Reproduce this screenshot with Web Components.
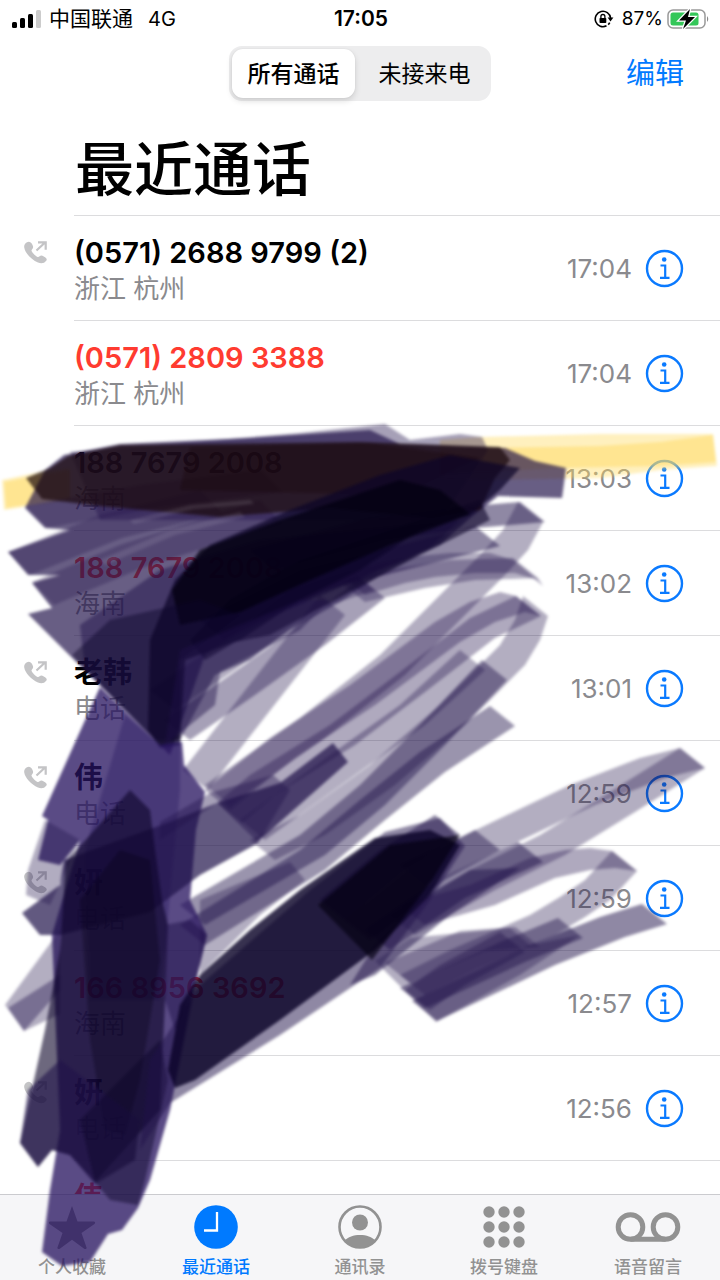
<!DOCTYPE html>
<html lang="zh-CN">
<head>
<meta charset="utf-8">
<meta name="viewport" content="width=device-width, initial-scale=1">
<title>最近通话</title>
<style>
  html, body { margin: 0; height: 100%; background: #fff; }
  body { font-family: Inter, "Noto Sans CJK SC", sans-serif; color: #000; }
</style>
</head>
<body>
<phone-screen>
  <status-bar slot="status" carrier="中国联通" network="4G" time="17:05" battery="87%"></status-bar>
  <recents-header slot="header"></recents-header>
  <call-row outgoing time="17:04">(0571) 2688 9799 (2)<span slot="place">浙江 杭州</span></call-row>
  <call-row missed time="17:04">(0571) 2809 3388<span slot="place">浙江 杭州</span></call-row>
  <call-row time="13:03">188 7679 2008<span slot="place">海南</span></call-row>
  <call-row missed time="13:02">188 7679 2008<span slot="place">海南</span></call-row>
  <call-row outgoing time="13:01">老韩<span slot="place">电话</span></call-row>
  <call-row outgoing time="12:59">伟<span slot="place">电话</span></call-row>
  <call-row outgoing time="12:59">妍<span slot="place">电话</span></call-row>
  <call-row missed time="12:57">166 8956 3692<span slot="place">海南</span></call-row>
  <call-row outgoing time="12:56">妍<span slot="place">电话</span></call-row>
  <call-row missed>伟</call-row>
  <tab-bar slot="tabs"></tab-bar>
  <marker-overlay slot="overlay"></marker-overlay>
</phone-screen>

<script>
function define(name, render) {
  customElements.define(name, class extends HTMLElement {
    constructor() {
      super();
      this.attachShadow({ mode: 'open' });
    }
    connectedCallback() {
      const t = document.createElement('template');
      t.innerHTML = render(this);
      this.shadowRoot.replaceChildren(t.content.cloneNode(true));
    }
  });
}

define('phone-screen', () => `
  <style>
    :host { display: flex; flex-direction: column; position: relative; height: 100vh; overflow: hidden; background: #fff; }
    main { flex: 1; min-height: 0; overflow: hidden; }
    .list { border-top: 1px solid #dcdcde; margin-left: 74px; }
  </style>
  <slot name="status"></slot>
  <slot name="header"></slot>
  <main><div class="list"></div><slot></slot></main>
  <slot name="tabs"></slot>
  <slot name="overlay"></slot>`);

define('status-bar', el => `
  <style>
    :host { display: grid; grid-template-columns: 1fr auto 1fr; align-items: center; height: 37px; padding: 0 10px 0 12px; font-size: 19px; line-height: 24px; }
    .left, .right { display: flex; align-items: center; }
    .left { gap: 8px; }
    .net { margin-left: 7px; font-size: 20px; }
    .right { justify-content: flex-end; gap: 4px; }
    .lock { margin-right: 4px; }
    .carrier { font-size: 21px; }
    b { font-weight: 600; font-size: 21px; }
    svg { display: block; }
  </style>
  <div class="left">
    <svg width="29" height="20" viewBox="0 0 29 20"><rect x="0" y="13" width="5" height="6" rx="1.5"/><rect x="8" y="9" width="5" height="10" rx="1.5"/><rect x="16" y="5" width="5" height="14" rx="1.5"/><rect x="24" y="1" width="5" height="18" rx="1.5" fill="#ccc"/></svg>
    <span class="carrier">${el.getAttribute('carrier')}</span><span class="net">${el.getAttribute('network')}</span>
  </div>
  <b>${el.getAttribute('time')}</b>
  <div class="right">
    <svg class="lock" width="20" height="18" viewBox="0 0 20 18"><path d="M12.5 15.8A7.7 7.7 0 1 1 16.6 8" fill="none" stroke="#000" stroke-width="1.6"/><path d="M13.6 7.6h5.8L16.5 11.400z"/><path d="M14.200 14.600a7.700 7.700 0 0 0 1.500-2" fill="none" stroke="#000" stroke-width="1.600"/><rect x="5.500" y="8" width="6.800" height="5" rx=".8"/><path d="M6.900 8V6.500a2 2 0 0 1 4 0V8" fill="none" stroke="#000" stroke-width="1.300"/></svg>
    <span>${el.getAttribute('battery')}</span>
    <svg width="43" height="22" viewBox="0 0 43 22"><rect x="1" y="2" width="37" height="18" rx="5" fill="none" stroke="#999" stroke-width="1.500"/><rect x="3.500" y="4.500" width="28" height="13" rx="2.500" fill="#34c759"/><path d="M40 8q2.500 3 0 6z" fill="#888"/><path d="M23 1 12 12.500h7L16 21l12-12h-7z" stroke="#fff" stroke-width="2.500" paint-order="stroke"/></svg>
  </div>`);

define('recents-header', () => `
  <style>
    :host { display: block; }
    .bar { display: grid; grid-template-columns: 1fr auto 1fr; align-items: center; padding: 9px 36px 0; }
    .segments { grid-column: 2; display: flex; gap: 6px; padding: 3px; border-radius: 13px; background: #ededee; }
    button { font: inherit; color: #000; border: 0; background: none; padding: 0; }
    .segments button { width: 127px; height: 49px; padding-bottom: 3px; font-size: 23px; border-radius: 11px; }
    .segments .on { width: 123px; background: #fff; box-shadow: 0 3px 6px #0002, 0 0 2px #0001; font-weight: 500; }
    .edit { justify-self: end; font-size: 29px; line-height: 40px; color: #007aff; }
    h1 { margin: 34px 0 10px; padding-left: 75px; font-size: 59px; line-height: 70px; font-weight: 500; }
  </style>
  <div class="bar">
    <div class="segments"><button class="on">所有通话</button><button>未接来电</button></div>
    <button class="edit">编辑</button>
  </div>
  <h1>最近通话</h1>`);

define('call-row', el => `
  <style>
    :host { display: grid; grid-template-columns: 74px 1fr; height: 105px; }
    .kind { padding: 25px 0 0 24px; }
    .body { display: flex; align-items: center; gap: 13px; padding-right: 36px; border-bottom: 1px solid #dcdcde; }
    .who { flex: 1; align-self: flex-start; padding-top: 19px; line-height: 36px; white-space: nowrap; }
    .name { font-size: 29px; font-weight: 600; color: ${el.hasAttribute('missed') ? '#ff3b30' : '#000'}; }
    .place, time { font-size: 26px; color: #8a8a8e; }
    button { border: 0; padding: 0; background: none; }
    svg { display: block; }
  </style>
  <div class="kind">${el.hasAttribute('outgoing') ? `<svg width="23" height="24" viewBox="0 0 23 24" fill="#c4c4c6"><path d="M3 1.300C5 0 7 1 8.300 3.500c1.300 2.500 1 3.400-.3 4.900-.9 1.100-.5 1.900.9 3.600 1.500 1.800 2.700 2.900 4.100 3.700 1.200.7 1.700.3 2.600-.5 1.300-1.200 2.400-.9 4.200.2 2.700 1.600 3.600 2.900 2.400 4.400-1.900 2.600-4.900 3.200-8.200 1.700C7 18.500 1 12 .2 6.300-.1 4 1.200 2.400 3 1.300z"/><path d="m12.500 9.500 8-7.500M14 1.300h7.700v7.500" fill="none" stroke="#c4c4c6" stroke-width="2.200"/></svg>` : ''}</div>
  <div class="body">
    <div class="who"><div class="name"><slot></slot></div><div class="place"><slot name="place"></slot></div></div>
    <time>${el.getAttribute('time') || ''}</time>
    <button aria-label="详情"><svg width="39" height="39" viewBox="0 0 39 39"><circle cx="19.500" cy="19.500" r="17.500" fill="none" stroke="#0a7aff" stroke-width="2.400"/><circle cx="19.200" cy="10.500" r="2.300" fill="#0a7aff"/><path d="M15.500 16.500h4.700v12M15 28.800h9.500" fill="none" stroke="#0a7aff" stroke-width="2.200"/></svg></button>
  </div>`);

const dots = [6, 21, 36].map(y => [6, 21, 36].map(x => `<circle cx="${x}" cy="${y}" r="5.700"/>`).join('')).join('');
const tabs = [
  ['个人收藏', '<svg width="48" height="44" viewBox="0 0 48 44"><path d="m24 1 5.500 15.500H46q2 .8.500 2.500L33.500 28l5.200 15q-.7 1.800-2.500.8L24 34.800l-12.200 9q-1.800 1-2.500-.8l5.200-15L1.500 19Q0 17.300 2 16.500h16.500z"/></svg>'],
  ['最近通话', '<svg width="44" height="44" viewBox="0 0 44 44"><circle cx="22" cy="22" r="21.800"/><path d="M23 7v18.500H10" fill="none" stroke="#fff" stroke-width="2.300"/></svg>'],
  ['通讯录', '<svg width="44" height="44" viewBox="0 0 44 44"><circle cx="22" cy="22" r="20.500" fill="none" stroke="#929292" stroke-width="2.600"/><circle cx="22" cy="17.500" r="8"/><path d="M7 35.500C12 28 32 28 37 35.500Q31 42.500 22 42.500T7 35.500z"/></svg>'],
  ['拨号键盘', `<svg width="42" height="42" viewBox="0 0 42 42">${dots}</svg>`],
  ['语音留言', '<svg width="66" height="32" viewBox="0 0 66 32" fill="none" stroke="#929292" stroke-width="5"><circle cx="15.500" cy="16" r="12.300"/><circle cx="50.500" cy="16" r="12.300"/><path d="M15.500 28.300h35"/></svg>']
];
define('tab-bar', () => `
  <style>
    :host { display: block; background: #f6f6f8; border-top: 1px solid #cbcbcf; }
    nav { display: grid; grid-template-columns: repeat(5, 1fr); height: 85px; }
    a { display: flex; flex-direction: column; align-items: center; font-size: 17px; line-height: 20px; color: #929292; fill: #929292; text-decoration: none; font-weight: 500; }
    a.on { color: #007aff; fill: #007aff; }
    .icon { display: grid; place-items: center; height: 60px; padding-top: 2px; }
  </style>
  <nav>${tabs.map((t, i) => `<a href="#"${i === 1 ? ' class="on"' : ''}><span class="icon">${t[1]}</span>${t[0]}</a>`).join('')}</nav>`);

/* A slanted marker nib dragged along a polyline; every stroke is one shape, so overlaps darken. */
function nibPath(points, nx, ny) {
  let d = '';
  for (let i = 0; i + 3 < points.length; i += 2) {
    const [x1, y1, x2, y2] = points.slice(i, i + 4);
    const cw = (x2 - x1) * ny - (y2 - y1) * nx > 0;
    d += cw ? `M${x1} ${y1}L${x2} ${y2}L${x2 + nx} ${y2 + ny}L${x1 + nx} ${y1 + ny}z`
            : `M${x1} ${y1}L${x1 + nx} ${y1 + ny}L${x2 + nx} ${y2 + ny}L${x2} ${y2}z`;
  }
  return d;
}
const stroke = (color, alpha, pts, nx = 25, ny = 20) => `<path fill="${color}" fill-opacity="${alpha}" d="${nibPath(pts.split(/[ ,]+/).map(Number), nx, ny)}"/>`;
const area = (color, alpha, pts) => `<polygon fill="${color}" fill-opacity="${alpha}" points="${pts}"/>`;
const ink = '#20124a', navy = '#0b0428', violet = '#26135f', brown = '#1a080c', black = '#030010';
const drawing = [
  area('#fed95c', .4, '2,480 40,472 70,468 70,500 4,510'),
  area('#fed95c', .45, '4,482 40,475 70,470 70,498 6,508'),
  area('#fed95c', .4, '440,440 480,437 600,434 713,434 717,466 660,470 600,478 480,480 440,478'),
  area('#fed95c', .45, '440,450 480,448 600,446 660,442 713,435 716,462 660,466 560,468 440,474'),
  /* right-hand fan */
  stroke(ink, .34, '518,502 503,530 480,555 430,605 380,655 300,718 205,785'),
  stroke(ink, .34, '340,575 380,563 410,557 450,553 490,553 513,560'),
  stroke(ink, .34, '340,582 400,568 450,560 513,558 518,566'),
  stroke(ink, .36, '516,596 500,592 470,602 435,622 350,685 270,738 205,790'),
  stroke(ink, .36, '516,596 470,618 400,672 330,725 250,775 217,803'),
  stroke(ink, .34, '523,596 515,620 500,645 440,705 370,765 300,815 250,840'),
  stroke(ink, .34, '460,650 400,705 330,755 240,820'),
  stroke(ink, .45, '482,660 420,725 360,785 300,835 180,905'),
  stroke(ink, .45, '490,706 420,752 360,800 300,850 180,925'),
  stroke(ink, .34, '320,595 265,665 183,770'),
  stroke(ink, .4, '360,578 300,625 230,675 165,720'),
  stroke(ink, .34, '350,570 290,590 210,650 150,690'),
  stroke(ink, .34, '680,748 640,758 570,785 480,828 400,865'),
  stroke(ink, .34, '680,748 610,792 540,835 470,870 390,915'),
  stroke(ink, .36, '612,851 590,848 565,850 530,858 470,885 400,905'),
  stroke(ink, .34, '612,851 585,880 560,897 530,915 450,950 400,975'),
  stroke(ink, .5, '642,904 600,917 530,945 412,1001'),
  stroke(ink, .45, '558,918 500,942 400,988'),
  stroke(ink, .34, '515,927 460,931 385,963'),
  stroke(ink, .4, '500,932 440,965 405,990'),
  area(ink, .34, '375,961 410,938 510,928 530,945 580,935 520,975 436,1022'),
  stroke(ink, .5, '518,842 440,878 365,930'),
  stroke(ink, .45, '475,830 420,860 345,920'),
  stroke(ink, .5, '435,815 380,850 320,900'),
  /* top mass */
  area(ink, .4, '70,452 180,443 300,433 385,424 410,440 460,434 482,437 488,450 440,520 100,520'),
  area(ink, .68, '45,470 64,455 120,444 250,438 370,430 400,444 505,448 535,461 566,468 562,498 498,496 470,518 440,545 380,570 240,630 205,655 170,755 28,614 52,608 32,583 60,575 28,575 8,552 70,530 45,528 25,508'),
  stroke(ink, .5, '520,502 450,508 360,520 250,550'),
  stroke(ink, .5, '475,526 400,545 300,570 200,620'),
  stroke(ink, .3, '8,552 100,515 200,490', 22, 23),
  stroke(ink, .3, '32,582 120,545 260,500', 22, 23),
  stroke(ink, .3, '25,506 140,485 260,470', 22, 22),
  area(ink, .5, '80,625 160,570 260,540 460,520 430,548 380,575 340,602 290,630 250,660 215,675 180,740 155,740 85,670'),
  area(navy, .6, '190,640 230,600 300,560 480,500 490,520 420,555 350,592 270,635 235,642 205,660'),
  area(brown, .7, '26,478 50,468 68,456 120,445 360,442 500,447 510,460 495,478 480,510 430,518 330,508 220,517 100,506 42,499'),
  area(brown, .4, '190,447 370,443 480,458 400,495 180,490'),
  area(navy, .7, '150,640 175,580 210,545 290,510 380,475 450,455 520,468 500,490 470,515 420,530 360,570 300,600 240,640 185,660 180,745 160,748 148,730'),
  area(black, .75, '172,590 200,550 280,520 400,480 440,490 470,514 390,545 310,580 240,612 180,625'),
  area(navy, .45, '72,655 110,620 200,600 240,615 180,660 180,740 160,745'),
  area(ink, .45, '180,650 300,600 330,600 300,630 220,672 215,705 165,745'),
  stroke('#fff', .1, '130,520 190,505 250,500', 4, 4),
  stroke('#fff', .1, '100,560 170,530 240,512', 5, 5),
  /* left column */
  area(violet, .76, '100,687 160,745 182,742 184,765 205,792 196,830 190,900 207,935 195,985 170,1110 150,1180 138,1208 122,1230 108,1234 90,1262 62,1266 42,1252 50,1190 60,1130 52,935 80,840 60,865 38,860 48,820 42,816'),
  area(ink, .35, '45,820 28,870 26,895 50,905 80,840'),
  area(violet, .35, '125,715 160,745 180,740 180,790 160,1000 90,1000 85,850'),
  area(ink, .34, '60,930 5,1005 24,1031 60,1014'),
  area(ink, .4, '60,975 8,1008 24,1031 60,990'),
  area(ink, .7, '22,913 60,885 64,860 167,823 217,803 258,843 200,875 150,912 60,935 40,935'),
  area(ink, .4, '160,822 210,793 273,775 290,790 258,843 217,803 160,840'),
  area(ink, .72, '217,803 280,783 333,743 348,762 280,822 257,842'),
  area(navy, .6, '66,862 130,790 150,810 155,850 162,900 168,925 165,1000 160,1110 95,1182 70,1155 52,1150 38,1167 20,1143 45,1030 60,950'),
  area(black, .3, '80,900 120,850 150,860 160,960 140,1080 125,1135 105,1130 90,1040'),
  area(ink, .6, '28,1090 60,1060 140,1120 135,1160 95,1184 70,1155 52,1150 38,1167 20,1143'),
  area(navy, .45, '80,1120 160,1040 168,1080 145,1180 138,1205 110,1200 95,1182'),
  area(ink, .5, '165,925 190,920 207,935 195,985 175,1030 165,1000'),
  /* centre-bottom dark sweep */
  area(ink, .34, '200,900 290,862 305,880 260,915 200,975'),
  area(ink, .5, '310,890 385,832 440,818 465,846 430,900 380,968 280,1035 170,1103 140,1150 150,1060 200,985'),
  area(ink, .5, '430,895 470,870 520,868 450,915 375,975 350,985 375,945'),
  area(navy, .82, '200,975 250,930 300,890 375,838 430,830 460,845 430,895 375,950 280,1020 195,1080 175,1088 168,1070 180,1005'),
  area(black, .65, '318,905 390,845 460,835 432,880 372,960')
].join('');

define('marker-overlay', () => `
  <style>
    :host { position: absolute; inset: 0; pointer-events: none; }
    svg { display: block; width: 100%; height: 100%; }
  </style>
  <svg viewBox="0 0 720 1280" preserveAspectRatio="none" aria-hidden="true">
    <defs><filter id="soft" x="-5%" y="-5%" width="110%" height="110%" color-interpolation-filters="sRGB"><feGaussianBlur stdDeviation="1.800"/></filter></defs>
    <g filter="url(#soft)">${drawing}</g>
  </svg>`);
</script>
</body>
</html>
